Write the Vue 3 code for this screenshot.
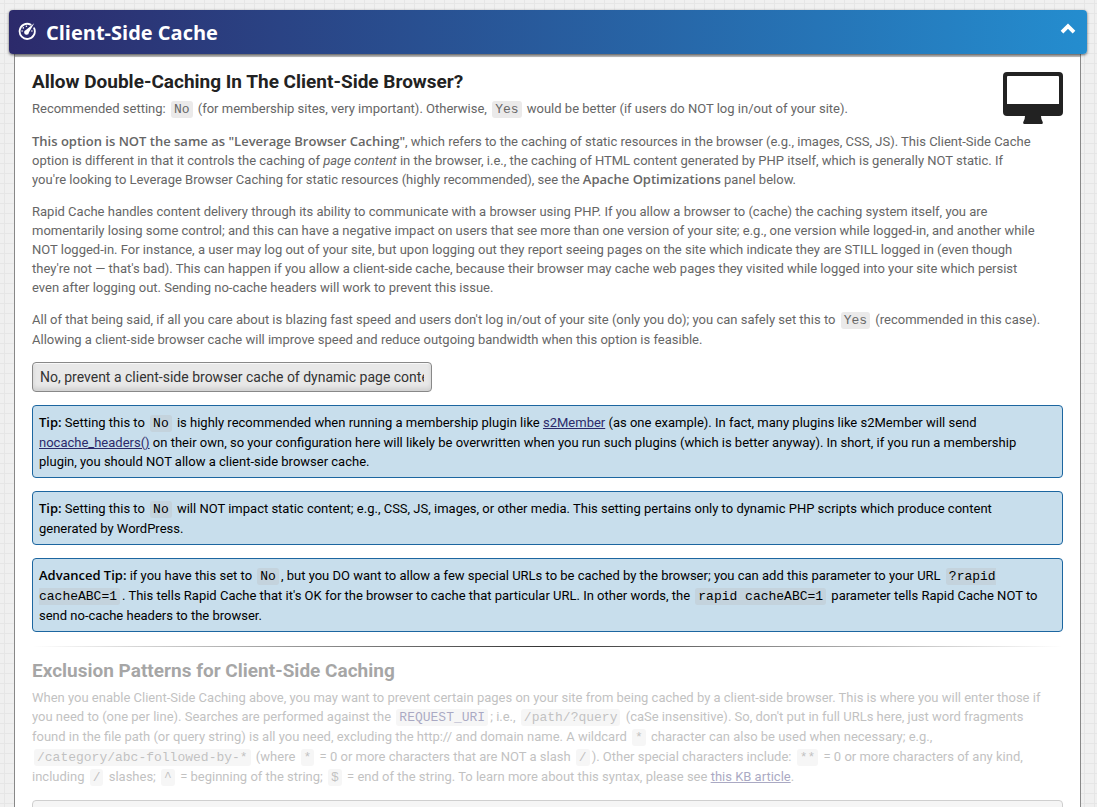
<script setup>
import { ref } from 'vue'

const open = ref(true)
const setting = ref('no')
const patterns = ref('')
</script>

<template>
  <main class="page">
    <button class="bar" type="button" :aria-expanded="open" aria-controls="cache-panel" @click="open = !open">
      <svg class="gauge" viewBox="0 0 18 18" aria-hidden="true">
        <path d="M12.6 2.6A7.6 7.6 0 1 0 16.1 6.2" fill="none" stroke="currentColor" stroke-width="1.8" stroke-linecap="round" />
        <path d="M16.2 1.2 10.9 10.4A2.4 2.4 0 1 1 7.9 8.1Z" fill="currentColor" />
        <g fill="currentColor">
          <circle cx="4.1" cy="9" r=".8" />
          <circle cx="5.3" cy="5.9" r=".8" />
          <circle cx="8.4" cy="4.3" r=".8" />
          <circle cx="13.9" cy="9" r=".8" />
        </g>
      </svg>
      <span class="bar-title">Client-Side Cache</span>
      <svg class="chevron" viewBox="0 0 16 12" aria-hidden="true">
        <path d="M2 9.200 8 3.200l6 6" fill="none" stroke="currentColor" stroke-width="3.800" />
      </svg>
    </button>

    <section v-show="open" id="cache-panel" class="panel">
      <svg class="monitor" viewBox="0 0 60 52" aria-hidden="true">
        <path fill-rule="evenodd" d="M4 0H56A4 4 0 0 1 60 4V40A4 4 0 0 1 56 44H38Q38 47 39.500 49.500Q40.500 52 38.500 52H21.500Q19.500 52 20.500 49.500Q22 47 22 44H4A4 4 0 0 1 0 40V4A4 4 0 0 1 4 0ZM5 4Q4 4 4 5V32H56V5Q56 4 55 4Z" fill="currentColor" />
      </svg>

      <h2>Allow Double-Caching In The Client-Side Browser?</h2>
      <p>Recommended setting: <code>No</code> (for membership sites, very important). Otherwise, <code>Yes</code> would be better (if users do NOT log in/out of your site).</p>
      <p><strong>This option is NOT the same as "Leverage Browser Caching"</strong>, which refers to the caching of static resources in the browser (e.g., images, CSS, JS). This Client-Side Cache<br>option is different in that it controls the caching of <em>page content</em> in the browser, i.e., the caching of HTML content generated by PHP itself, which is generally NOT static. If<br>you're looking to Leverage Browser Caching for static resources (highly recommended), see the <strong>Apache Optimizations</strong> panel below.</p>
      <p>Rapid Cache handles content delivery through its ability to communicate with a browser using PHP. If you allow a browser to (cache) the caching system itself, you are<br>momentarily losing some control; and this can have a negative impact on users that see more than one version of your site; e.g., one version while logged-in, and another while<br>NOT logged-in. For instance, a user may log out of your site, but upon logging out they report seeing pages on the site which indicate they are STILL logged in (even though<br>they're not — that's bad). This can happen if you allow a client-side cache, because their browser may cache web pages they visited while logged into your site which persist<br>even after logging out. Sending no-cache headers will work to prevent this issue.</p>
      <p>All of that being said, if all you care about is blazing fast speed and users don't log in/out of your site (only you do); you can safely set this to <code>Yes</code> (recommended in this case).<br>Allowing a client-side browser cache will improve speed and reduce outgoing bandwidth when this option is feasible.</p>

      <select v-model="setting" class="field" aria-label="Allow double-caching in the client-side browser">
        <option value="no">No, prevent a client-side browser cache of dynamic page content.</option>
        <option value="yes">Yes, I will allow a client-side cache of pages on the site.</option>
      </select>

      <p class="tip"><strong>Tip:</strong> Setting this to <code>No</code> is highly recommended when running a membership plugin like <a href="#s2member">s2Member</a> (as one example). In fact, many plugins like s2Member will send<br><a href="#nocache-headers">nocache_headers()</a> on their own, so your configuration here will likely be overwritten when you run such plugins (which is better anyway). In short, if you run a membership<br>plugin, you should NOT allow a client-side browser cache.</p>
      <p class="tip"><strong>Tip:</strong> Setting this to <code>No</code> will NOT impact static content; e.g., CSS, JS, images, or other media. This setting pertains only to dynamic PHP scripts which produce content<br>generated by WordPress.</p>
      <p class="tip"><strong>Advanced Tip:</strong> if you have this set to <code>No</code>, but you DO want to allow a few special URLs to be cached by the browser; you can add this parameter to your URL <code>?rapid<br>cacheABC=1</code>. This tells Rapid Cache that it's OK for the browser to cache that particular URL. In other words, the <code>rapid cacheABC=1</code> parameter tells Rapid Cache NOT to<br>send no-cache headers to the browser.</p>

      <hr>

      <div class="muted">
        <h2 id="patterns-title">Exclusion Patterns for Client-Side Caching</h2>
        <p>When you enable Client-Side Caching above, you may want to prevent certain pages on your site from being cached by a client-side browser. This is where you will enter those if<br>you need to (one per line). Searches are performed against the <a class="plain" href="#request-uri"><code>REQUEST_URI</code></a>; i.e., <code>/path/?query</code> (caSe insensitive). So, don't put in full URLs here, just word fragments<br>found in the file path (or query string) is all you need, excluding the http:// and domain name. A wildcard <code>*</code> character can also be used when necessary; e.g.,<br><code>/category/abc-followed-by-*</code> (where <code>*</code> = 0 or more characters that are NOT a slash <code>/</code>). Other special characters include: <code>**</code> = 0 or more characters of any kind,<br>including <code>/</code> slashes; <code>^</code> = beginning of the string; <code>$</code> = end of the string. To learn more about this syntax, please see <a href="#kb-article">this KB article</a>.</p>
        <textarea v-model="patterns" class="patterns" rows="5" aria-labelledby="patterns-title"></textarea>
      </div>
    </section>
  </main>
</template>

<style>
html {
  height: 100%;
}

body {
  height: 100%;
  margin: 0;
  overflow: hidden;
  background-color: #f0f0f0;
  background-image:
    linear-gradient(to right, #e6e6e6 1px, transparent 1px),
    linear-gradient(to bottom, #e6e6e6 1px, transparent 1px);
  background-size: 10px 10px;
  background-position: 4px 3px;
}
</style>

<style scoped>
.page {
  padding: 10px 10px 0 9px;
  font: 13px/19px Roboto, sans-serif;
  color: #666;
}

.bar {
  display: flex;
  align-items: flex-start;
  position: relative;
  width: 100%;
  height: 44px;
  padding: 10px 11px 0 9px;
  border: 0;
  border-radius: 4px;
  background: linear-gradient(to right, #2c2a6b, #248dcf);
  box-shadow: 0 1px 3px #0009;
  color: #fff;
  font: inherit;
  text-align: left;
  cursor: pointer;
}

.gauge {
  width: 18px;
  height: 18px;
  margin-top: 2px;
}

.bar-title {
  flex: 1;
  margin-left: 10px;
  font: 700 20px/25px "Open Sans", sans-serif;
}

.chevron {
  width: 16px;
  height: 12px;
  margin-top: 3px;
}

.panel {
  margin: 0 6px 0 5px;
  padding: 17px 17px 0;
  border: 1px solid #888;
  border-top: 0;
  background: #fff;
  box-shadow: inset 0 3px #c4c4c4;
}

.monitor {
  float: right;
  width: 60px;
  height: 52px;
  margin-top: 1px;
  color: #222;
}

h2 {
  margin: 0 0 6px;
  color: #222;
  font-size: 19px;
  font-weight: 700;
  line-height: 22px;
}

p {
  margin: 0 0 13px;
}

strong {
  font-family: "Open Sans", sans-serif;
  font-weight: 600;
}

code {
  margin: 0 2px;
  padding: 1px 3px;
  border-radius: 3px;
  background: rgba(188, 184, 186, 0.3);
  font: 13px/19px "Liberation Mono", monospace;
}

a {
  color: #2c2a6b;
}

.plain {
  text-decoration: none;
}

.field {
  display: block;
  appearance: none;
  width: 400px;
  max-width: 100%;
  height: 30px;
  margin: 0 0 13px;
  padding: 0 7px;
  border: 1px solid #888;
  border-radius: 4px;
  background: #e8e8e8;
  box-shadow: inset 0 1px #f8f8f8, inset 0 -3px 4px #0000001a;
  color: #333;
  font-family: inherit;
  font-size: 14px;
  line-height: 28px;
}

.tip {
  padding: 7px 6px 6px;
  border: 1px solid #1c66a0;
  border-radius: 4px;
  background: #c8deec;
  color: #000;
}

hr {
  height: 1px;
  margin: 14px 0 13px;
  border: 0;
  background: linear-gradient(to right, transparent, #333, transparent);
}

.muted {
  opacity: 0.4;
}

.patterns {
  display: block;
  box-sizing: border-box;
  width: 100%;
  height: 90px;
  padding: 7px;
  border: 1px solid #888;
  border-radius: 4px;
  background: #e8e8e8;
  font: 13px/19px "Liberation Mono", monospace;
  resize: none;
}
</style>
